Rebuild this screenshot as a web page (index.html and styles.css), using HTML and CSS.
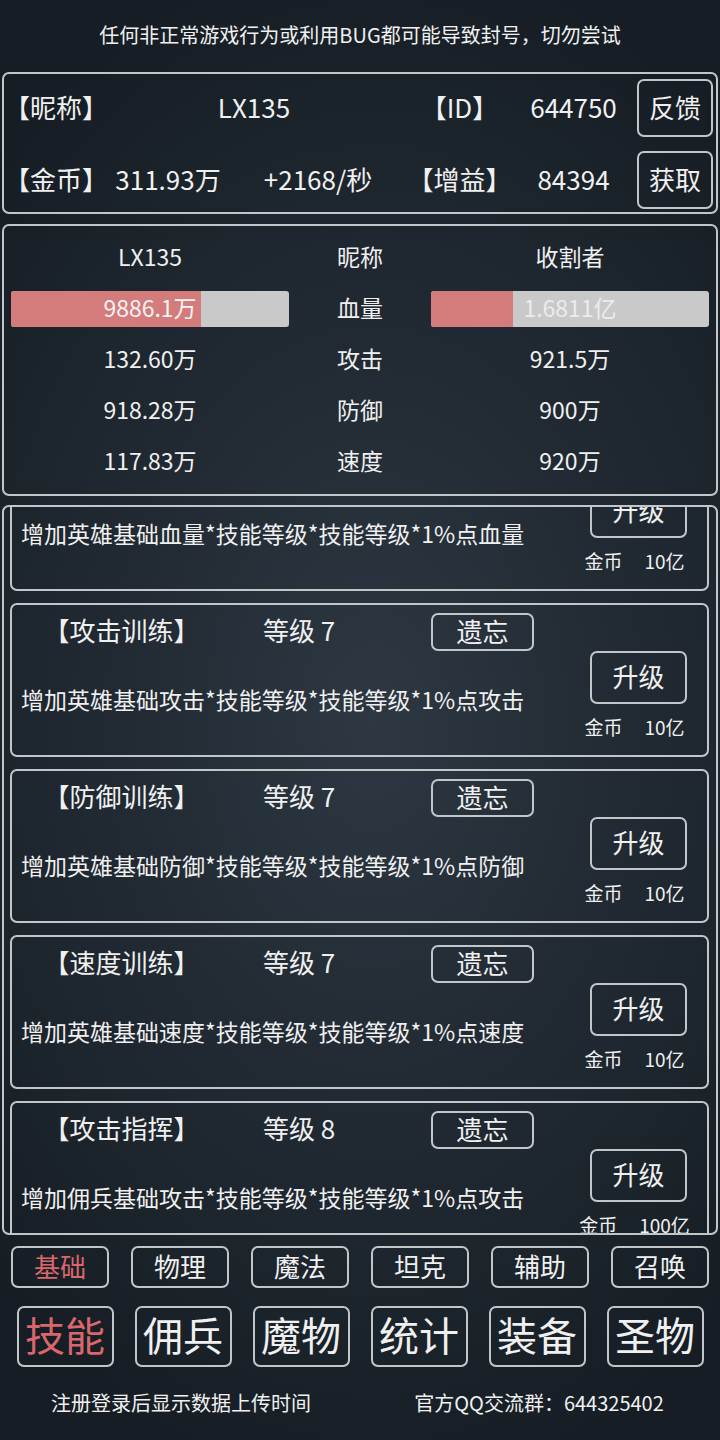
FILE: index.html
```html
<!DOCTYPE html>
<html lang="zh-CN">
<head>
  <meta charset="UTF-8" />
  <meta name="viewport" content="width=device-width, initial-scale=1.0"/>
  <title>技能</title>
  <link rel="stylesheet" href="styles.css">
</head>
<body>

<div class="notice">任何非正常游戏行为或利用BUG都可能导致封号，切勿尝试</div>

<!-- 玩家信息 -->
<div class="panel info">
  <span class="cell">【昵称】</span>
  <span class="cell span2">LX135</span>
  <span class="cell">【ID】</span>
  <span class="cell">644750</span>
  <button class="btn info-btn">反馈</button>

  <span class="cell">【金币】</span>
  <span class="cell">311.93万</span>
  <span class="cell">+2168/秒</span>
  <span class="cell">【增益】</span>
  <span class="cell">84394</span>
  <button class="btn info-btn">获取</button>
</div>

<!-- 对战属性 -->
<div class="panel stats">
  <span>LX135</span><span>昵称</span><span>收割者</span>

  <div class="bar"><div class="bar-fill" style="width: 68.3%"></div><span class="bar-text">9886.1万</span></div>
  <span>血量</span>
  <div class="bar"><div class="bar-fill" style="width: 29.5%"></div><span class="bar-text dim">1.6811亿</span></div>

  <span>132.60万</span><span>攻击</span><span>921.5万</span>
  <span>918.28万</span><span>防御</span><span>900万</span>
  <span>117.83万</span><span>速度</span><span>920万</span>
</div>

<!-- 技能列表 -->
<div class="skills" id="skills">
  <div class="card">
    <div class="card-main">
      <div class="card-head"><span class="title">【血量训练】</span><span class="level">等级 7</span><button class="btn forget">遗忘</button></div>
      <div class="desc">增加英雄基础血量*技能等级*技能等级*1%点血量</div>
    </div>
    <div class="card-side"><button class="btn upgrade">升级</button><div class="cost"><span>金币</span><span>10亿</span></div></div>
  </div>

  <div class="card">
    <div class="card-main">
      <div class="card-head"><span class="title">【攻击训练】</span><span class="level">等级 7</span><button class="btn forget">遗忘</button></div>
      <div class="desc">增加英雄基础攻击*技能等级*技能等级*1%点攻击</div>
    </div>
    <div class="card-side"><button class="btn upgrade">升级</button><div class="cost"><span>金币</span><span>10亿</span></div></div>
  </div>

  <div class="card">
    <div class="card-main">
      <div class="card-head"><span class="title">【防御训练】</span><span class="level">等级 7</span><button class="btn forget">遗忘</button></div>
      <div class="desc">增加英雄基础防御*技能等级*技能等级*1%点防御</div>
    </div>
    <div class="card-side"><button class="btn upgrade">升级</button><div class="cost"><span>金币</span><span>10亿</span></div></div>
  </div>

  <div class="card">
    <div class="card-main">
      <div class="card-head"><span class="title">【速度训练】</span><span class="level">等级 7</span><button class="btn forget">遗忘</button></div>
      <div class="desc">增加英雄基础速度*技能等级*技能等级*1%点速度</div>
    </div>
    <div class="card-side"><button class="btn upgrade">升级</button><div class="cost"><span>金币</span><span>10亿</span></div></div>
  </div>

  <div class="card">
    <div class="card-main">
      <div class="card-head"><span class="title">【攻击指挥】</span><span class="level">等级 8</span><button class="btn forget">遗忘</button></div>
      <div class="desc">增加佣兵基础攻击*技能等级*技能等级*1%点攻击</div>
    </div>
    <div class="card-side"><button class="btn upgrade">升级</button><div class="cost"><span>金币</span><span>100亿</span></div></div>
  </div>
</div>

<!-- 分类 -->
<div class="tabs">
  <button class="btn tab active">基础</button>
  <button class="btn tab">物理</button>
  <button class="btn tab">魔法</button>
  <button class="btn tab">坦克</button>
  <button class="btn tab">辅助</button>
  <button class="btn tab">召唤</button>
</div>

<div class="nav">
  <button class="btn nav-btn active">技能</button>
  <button class="btn nav-btn">佣兵</button>
  <button class="btn nav-btn">魔物</button>
  <button class="btn nav-btn">统计</button>
  <button class="btn nav-btn">装备</button>
  <button class="btn nav-btn">圣物</button>
</div>

<div class="footer">
  <span>注册登录后显示数据上传时间</span>
  <span>官方QQ交流群：644325402</span>
</div>

<script>
// 列表已经往下滚了一点
document.getElementById('skills').scrollTop = 76;
</script>

</body>
</html>
```

FILE: styles.css
```css
body {
  margin: 0;
  padding: 0 2px;
  min-height: 1440px;
  box-sizing: border-box;
  font-family: "Noto Sans CJK SC", "Noto Sans", sans-serif;
  color: #f0f0f0;
  background: radial-gradient(ellipse 75% 55% at 52% 50%, #2d3842 0%, #222b34 45%, #161d24 100%);
}

.notice {
  height: 72px;
  padding-bottom: 3px;
  box-sizing: border-box;
  display: flex;
  align-items: center;
  justify-content: center;
  font-size: 20px;
}

.panel {
  border: 2px solid #c3c6c8;
  border-radius: 7px;
  box-sizing: border-box;
}

.btn {
  background: transparent;
  border: 2px solid #c3c6c8;
  border-radius: 7px;
  color: #f0f0f0;
  font-family: inherit;
  padding: 0 0 3px;
  line-height: 1;
  box-sizing: border-box;
}

/* 玩家信息 */
.info {
  height: 142px;
  display: grid;
  grid-template-columns: 100px 128px 172px 111px 117px 81px;
  grid-template-rows: 58px 58px;
  row-gap: 14px;
  padding: 5px 3px 3px 0;
  align-items: center;
  font-size: 26px;
}

.cell {
  text-align: center;
  white-space: nowrap;
  padding-bottom: 4px;
}

.span2 {
  grid-column: span 2;
}

.info-btn {
  justify-self: end;
  width: 76px;
  height: 58px;
  font-size: 26px;
}

/* 属性对比 */
.stats {
  margin-top: 10px;
  height: 272px;
  display: grid;
  grid-template-columns: 278px 142px 278px;
  grid-auto-rows: 51px;
  padding: 6px 7px;
  align-items: center;
  text-align: center;
  font-size: 23px;
}

.stats > span {
  padding-bottom: 4px;
}

.bar {
  position: relative;
  height: 36px;
  background: #c9c9c9;
  border-radius: 3px;
  overflow: hidden;
  display: flex;
  align-items: center;
  justify-content: center;
  padding-bottom: 3px;
  box-sizing: border-box;
}

.bar-fill {
  position: absolute;
  left: 0;
  top: 0;
  bottom: 0;
  background: #d47b7b;
}

.bar-text {
  position: relative;
  color: #f4f4f4;
}

.bar-text.dim {
  color: #ececec;
}

/* 技能列表 */
.skills {
  margin-top: 9px;
  height: 730px;
  box-sizing: border-box;
  border: 2px solid #c3c6c8;
  border-radius: 7px;
  padding: 6px 7px 6px 6px;
  overflow: hidden;
  display: flex;
  flex-direction: column;
  gap: 12px;
}

.card {
  flex: none;
  height: 154px;
  box-sizing: border-box;
  border: 2px solid #c3c6c8;
  border-radius: 7px;
  display: flex;
}

.card-main {
  width: 558px;
}

.card-head {
  display: flex;
  align-items: center;
  margin-top: 6px;
  font-size: 26px;
}

.title {
  width: 219px;
  text-align: center;
  padding-bottom: 5px;
}

.level {
  width: 168px;
  margin-left: 32px;
  padding-bottom: 5px;
}

.forget {
  width: 103px;
  height: 38px;
  font-size: 26px;
}

.desc {
  margin-top: 31px;
  padding-left: 9px;
  line-height: 30px;
  font-size: 23px;
  white-space: nowrap;
}

.card-side {
  flex: 1;
  display: flex;
  flex-direction: column;
  align-items: center;
  padding-top: 46px;
}

.upgrade {
  width: 97px;
  height: 53px;
  font-size: 26px;
}

.cost {
  margin-top: 11px;
  margin-right: 8px;
  line-height: 24px;
  font-size: 19px;
  display: flex;
  gap: 22px;
}

/* 底部按钮 */
.tabs {
  margin-top: 11px;
  display: flex;
  justify-content: center;
  gap: 22px;
}

.tab {
  width: 98px;
  height: 42px;
  font-size: 26px;
}

.nav {
  margin-top: 18px;
  display: flex;
  justify-content: center;
  gap: 21px;
}

.nav-btn {
  width: 97px;
  height: 61px;
  font-size: 40px;
  padding-bottom: 5px;
}

.btn.active {
  color: #d9676b;
}

.footer {
  margin-top: 21px;
  display: grid;
  grid-template-columns: 1fr 1fr;
  text-align: center;
  line-height: 30px;
  font-size: 20px;
}
```
